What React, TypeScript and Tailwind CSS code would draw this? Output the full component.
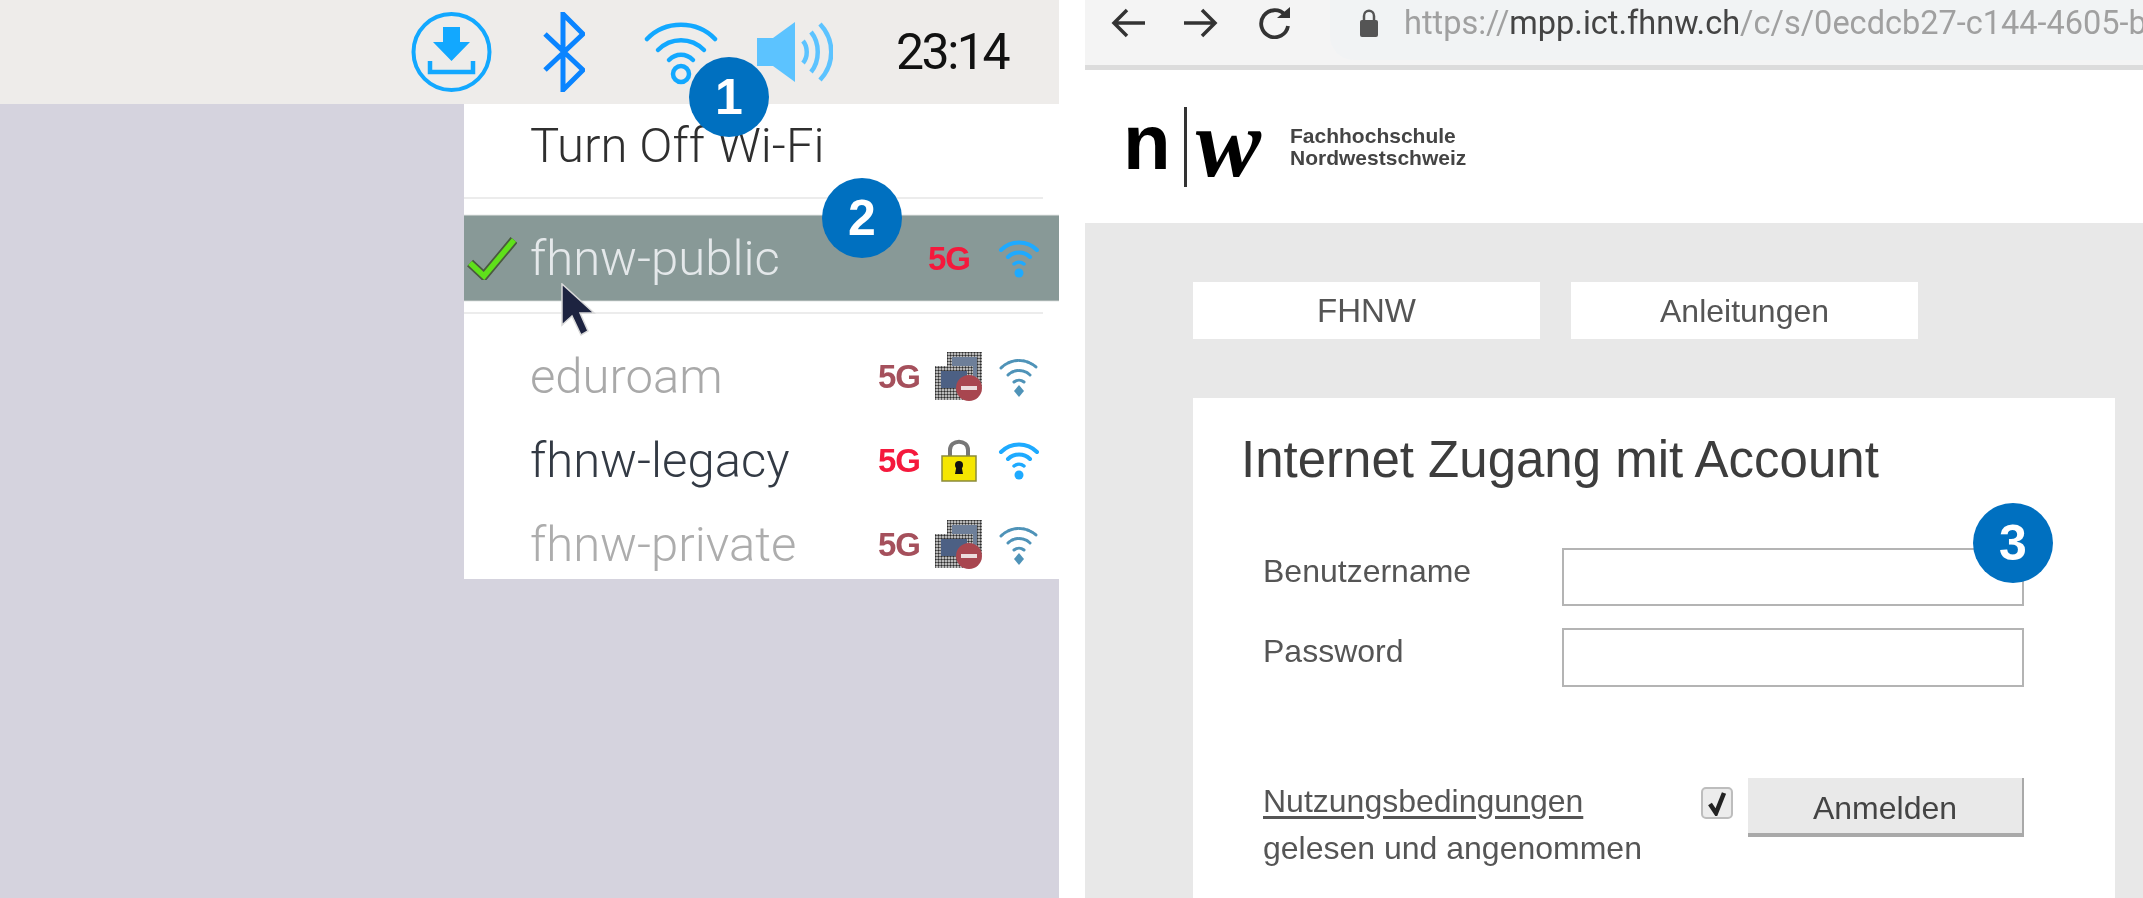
const roboto = "font-['Roboto',sans-serif]";
const arial = "font-['Liberation_Sans',Arial,sans-serif]";

function Wifi({ className = "", color = "#1eaaff", dot = true }: { className?: string; color?: string; dot?: boolean }) {
  return (
    <svg viewBox="0 0 42 42" className={className} fill="none" stroke={color} strokeLinecap="round">
      <path d="M3 13 C13 3 29 3 39 13" strokeWidth="4" />
      <path d="M10 20 C16 14 26 14 32 20" strokeWidth="4" />
      <path d="M16 27 C19 24.500 23 24.500 26 27" strokeWidth="3.500" />
      {dot && <circle cx="21" cy="36" r="4.500" fill={color} stroke="none" />}
    </svg>
  );
}

function FadedWifi({ className = "" }: { className?: string }) {
  return (
    <svg viewBox="0 0 42 42" className={className} fill="none" stroke="#4f93b8" strokeLinecap="round">
      <path d="M3 13 C13 3 29 3 39 13" strokeWidth="3" strokeDasharray="2.500 1.500" />
      <path d="M10 20 C16 14 26 14 32 20" strokeWidth="3" strokeDasharray="2.500 1.500" />
      <path d="M16 27 C19 24.500 23 24.500 26 27" strokeWidth="3" />
      <path d="M21 30 L26 36 L21 42 L16 36 Z" fill="#4f93b8" stroke="none" />
    </svg>
  );
}

function Blocked({ className = "", id }: { className?: string; id: string }) {
  return (
    <svg viewBox="0 0 49 50" className={className}>
      <defs>
        <pattern id={id} width="3" height="3" patternUnits="userSpaceOnUse">
          <rect width="3" height="3" fill="#e8e8e8" />
          <circle cx="1.500" cy="1.500" r="1.200" fill="#2d2d2d" />
        </pattern>
      </defs>
      <rect x="13" y="1" width="35" height="35" fill={`url(#${id})`} />
      <rect x="18" y="6" width="25" height="20" fill="#6e7f99" />
      <rect x="1" y="15" width="38" height="34" fill={`url(#${id})`} />
      <rect x="7" y="20" width="26" height="17" fill="#4c6084" />
      <circle cx="35" cy="37" r="13" fill="#a8464f" />
      <rect x="27" y="35" width="16" height="4" fill="#ecdcdc" />
    </svg>
  );
}

function Lock({ className = "" }: { className?: string }) {
  return (
    <svg viewBox="0 0 36 44" className={className}>
      <path d="M9 20 V12 C9 1 27 1 27 12 V20" fill="none" stroke="#777" strokeWidth="4" />
      <rect x="1" y="18" width="34" height="25" fill="#f5e600" stroke="#8a8a3a" strokeWidth="1.500" />
      <circle cx="18" cy="27" r="4" fill="#111" />
      <path d="M15.500 28 H20.500 L22 36 H14 Z" fill="#111" />
    </svg>
  );
}

function FiveG({ faded = false, className = "" }: { faded?: boolean; className?: string }) {
  return (
    <span className={`${arial} text-[33px] leading-none font-bold tracking-[-1px] ${faded ? "text-[#a5505c]" : "text-[#f5193c]"} ${className}`}>
      5G
    </span>
  );
}

function Badge({ n, className }: { n: string; className: string }) {
  return (
    <div className={`absolute flex h-[80px] w-[80px] items-center justify-center rounded-full bg-[#0070c0] text-[50px] leading-none font-bold text-white ${arial} ${className}`}>
      {n}
    </div>
  );
}

function Row({ name, tone, icons, height = "h-[84px]" }: { name: string; tone: string; icons: React.ReactNode; height?: string }) {
  return (
    <div className={`flex items-center pr-[19px] pl-[66px] ${height}`}>
      <span className={`flex-1 text-[49px] leading-none font-light ${tone}`}>{name}</span>
      {icons}
    </div>
  );
}

export default function App() {
  return (
    <div className={`relative flex h-[898px] w-[2143px] overflow-hidden bg-white ${arial}`}>
      {/* Left: desktop panel */}
      <div className={`flex h-full w-[1059px] flex-col bg-[#d5d3de] ${roboto}`}>
        <div className="flex h-[104px] items-center bg-[#eeecea] pl-[411px] blur-[0.6px]">
          <svg viewBox="0 0 81 82" className="h-[82px] w-[81px]" fill="none">
            <circle cx="40.500" cy="41" r="38" stroke="#12a8ff" strokeWidth="4" />
            <path d="M32 16 H49 V31 H59 L40.500 50 L22 31 H32 Z" fill="#12a8ff" />
            <path d="M19 50 V61 H62 V50" stroke="#12a8ff" strokeWidth="4.500" />
          </svg>
          <svg viewBox="0 0 42 80" className="ml-[51px] h-[80px] w-[42px]" fill="none">
            <path d="M2 22 L40 58 L20 78 V2 L40 22 L2 58" stroke="#0a84ff" strokeWidth="5" strokeLinejoin="miter" />
          </svg>
          <svg viewBox="0 0 74 66" className="ml-[59px] h-[66px] w-[74px]" fill="none" stroke="#12a8ff" strokeLinecap="round">
            <path d="M3 20 C21 1 53 1 71 20" strokeWidth="4.500" />
            <path d="M14 31 C27 18 47 18 60 31" strokeWidth="4.500" />
            <path d="M25 41 C32 34 42 34 49 41" strokeWidth="4.500" />
            <circle cx="37" cy="55" r="8" strokeWidth="4.500" />
          </svg>
          <svg viewBox="0 0 76 60" className="ml-[39px] h-[60px] w-[76px]" fill="none">
            <path d="M0 16 H16 L38 0 V60 L16 44 H0 Z" fill="#5cc3ff" />
            <path d="M46 19 C51 25 51 35 46 41" stroke="#5cc3ff" strokeWidth="4.500" />
            <path d="M54 10 C63 21 63 39 54 50" stroke="#5cc3ff" strokeWidth="4.500" />
            <path d="M63 2 C78 18 78 42 63 58" stroke="#5cc3ff" strokeWidth="4.500" />
          </svg>
          <span className="ml-[63px] text-[50px] leading-none font-normal tracking-[-2.500px] text-[#111]">23:14</span>
        </div>

        <div className="ml-[464px] flex h-[475px] w-[595px] flex-col overflow-hidden bg-white">
          <div className="blur-[0.6px]">
            <div className="flex h-[93px] items-center pb-[10px] pl-[66px] text-[49px] leading-none font-light text-[#2f2f2f]">
              Turn Off Wi-Fi
            </div>
            <div className="mr-[16px] h-[2px] bg-[#ececec]" />
            <div className="mt-[17px] flex h-[84px] items-center bg-[#889997] pr-[19px] shadow-[0_-1px_1px_#b5bfbd,0_1px_1px_#a8b3b1]">
              <svg viewBox="0 0 50 44" className="ml-[3px] h-[44px] w-[50px]" fill="none">
                <path d="M3 27 L17 40 L47 4" stroke="#4a5a3f" strokeWidth="9" />
                <path d="M3 27 L17 40 L47 4" stroke="#5fe01a" strokeWidth="5.500" />
              </svg>
              <span className="ml-[13px] flex-1 text-[49px] leading-none font-light text-[#e4e8ea]">fhnw-public</span>
              <FiveG className="mr-[28px]" />
              <Wifi className="h-[42px] w-[42px]" />
            </div>
            <div className="mt-[12px] mr-[16px] h-[2px] bg-[#ececec]" />
            <div className="mt-[20px]">
              <Row
                name="eduroam"
                tone="text-[#a9a9a9]"
                icons={
                  <div className="flex items-center">
                    <FiveG faded />
                    <Blocked id="dither-a" className="ml-[14px] h-[50px] w-[49px]" />
                    <FadedWifi className="ml-[15px] h-[42px] w-[42px]" />
                  </div>
                }
              />
              <Row
                name="fhnw-legacy"
                tone="text-[#333a44]"
                icons={
                  <div className="flex items-center">
                    <FiveG />
                    <Lock className="mr-[7px] ml-[21px] h-[44px] w-[36px]" />
                    <Wifi className="ml-[14px] h-[42px] w-[42px]" />
                  </div>
                }
              />
              <Row
                name="fhnw-private"
                tone="text-[#adadad]"
                icons={
                  <div className="flex items-center">
                    <FiveG faded />
                    <Blocked id="dither-b" className="ml-[14px] h-[50px] w-[49px]" />
                    <FadedWifi className="ml-[15px] h-[42px] w-[42px]" />
                  </div>
                }
              />
            </div>
          </div>
        </div>
      </div>

      {/* Right: browser panel */}
      <div className="ml-[26px] flex h-full min-w-0 flex-1 flex-col">
        <div className="flex h-[70px] shrink-0 border-b-[5px] border-[#dcdcdc] bg-[#f4f4f4] blur-[0.6px]">
          <div className="flex h-[46px] items-center pl-[26px]">
            <svg viewBox="0 0 34 30" className="h-[30px] w-[34px]" fill="none" stroke="#333" strokeWidth="3.500">
              <path d="M34 15 H3 M16 2 L3 15 L16 28" />
            </svg>
            <svg viewBox="0 0 34 30" className="ml-[39px] h-[30px] w-[34px]" fill="none" stroke="#333" strokeWidth="3.500">
              <path d="M0 15 H31 M18 2 L31 15 L18 28" />
            </svg>
            <svg viewBox="0 0 34 32" className="ml-[40px] h-[32px] w-[34px]" fill="none">
              <path d="M27 8 A13.500 13.500 0 1 0 30 19" stroke="#333" strokeWidth="3.800" />
              <path d="M19 11 H32 V0 Z" fill="#333" />
            </svg>
          </div>
          <div className="ml-[38px] flex h-[60px] min-w-0 flex-1 items-center overflow-hidden rounded-bl-[24px] bg-[#f1f3f4] pb-[14px] pl-[29px]">
            <svg viewBox="0 0 20 30" className="h-[30px] w-[20px] shrink-0">
              <path d="M5 13 V8 C5 1 15 1 15 8 V13" fill="none" stroke="#555" strokeWidth="2.500" />
              <rect x="1" y="12" width="18" height="17" rx="2" fill="#555" />
            </svg>
            <span className={`ml-[25px] text-[32.5px] leading-none whitespace-nowrap text-[#a0a0a0] ${roboto}`}>
              https://<span className="text-[#444]">mpp.ict.fhnw.ch</span>/c/s/0ecdcb27-c144-4605-b
            </span>
          </div>
        </div>

        <div className="flex h-[153px] shrink-0 items-center bg-white pl-[38px] blur-[0.5px]">
          <span className="mb-[10px] text-[78px] leading-none font-bold text-black">n</span>
          <div className="ml-[13px] h-[80px] w-[3px] bg-[#333]" />
          <span className="mb-[8px] ml-[9px] font-['Liberation_Serif',serif] text-[98px] leading-none font-bold text-black italic">w</span>
          <div className="ml-[29px] flex flex-col text-[21px] leading-[22px] font-bold text-[#444]">
            <span>Fachhochschule</span>
            <span>Nordwestschweiz</span>
          </div>
        </div>

        <div className="flex flex-1 flex-col bg-[#e8e8e8] pt-[59px] pr-[28px] pl-[108px]">
          <div className="flex gap-[31px] blur-[0.4px]">
            <div className="flex h-[57px] w-[347px] items-center justify-center bg-white text-[33px] text-[#555]">FHNW</div>
            <div className="flex h-[57px] w-[347px] items-center justify-center bg-white text-[32px] text-[#555]">Anleitungen</div>
          </div>
          <div className="mt-[59px] flex-1 bg-white pt-[36px] pr-[91px] pl-[48px] blur-[0.4px]">
            <h1 className="text-[51px] leading-[52px] font-normal text-[#3d3d3d]">Internet Zugang mit Account</h1>
            <div className="mt-[62px] flex items-start">
              <span className="ml-[22px] w-[299px] pt-[5px] text-[32px] leading-[36px] text-[#555]">Benutzername</span>
              <input className="h-[58px] w-[462px] border-2 border-[#b4b4b4] bg-white" aria-label="Benutzername" />
            </div>
            <div className="mt-[22px] flex items-start">
              <span className="ml-[22px] w-[299px] pt-[5px] text-[32px] leading-[36px] text-[#555]">Password</span>
              <input className="h-[59px] w-[462px] border-2 border-[#b4b4b4] bg-white" aria-label="Password" />
            </div>
            <div className="mt-[91px] flex items-start">
              <div className="ml-[22px] w-[438px] text-[32px] leading-[47px] text-[#555]">
                <div className="underline underline-offset-4">Nutzungsbedingungen</div>
                <div>gelesen und angenommen</div>
              </div>
              <div className="mt-[9px] flex h-[32px] w-[32px] items-center justify-center rounded-[5px] border-2 border-[#bdbdbd] bg-[#ececec]">
                <svg viewBox="0 0 20 26" className="h-[26px] w-[20px]" fill="none">
                  <path d="M3 14 L9 23 L17 3" stroke="#222" strokeWidth="4.500" />
                </svg>
              </div>
              <div className="ml-[15px] flex h-[59px] w-[276px] items-center justify-center border-r-2 border-b-4 border-[#a9a9a9] bg-[#e9e9e9] pt-[4px] text-[32px] text-[#444]">
                Anmelden
              </div>
            </div>
          </div>
        </div>
      </div>

      {/* Cursor over the menu */}
      <svg viewBox="0 0 36 58" className="absolute top-[283px] left-[560px] h-[58px] w-[36px] blur-[0.5px]">
        <path d="M2 1 V42 L12 33 L21 52 L28 48 L20 30 H34 Z" fill="#1d2340" stroke="#d9d9d9" strokeWidth="1.500" />
      </svg>

      <Badge n="1" className="top-[57px] left-[689px]" />
      <Badge n="2" className="top-[178px] left-[822px]" />
      <Badge n="3" className="top-[503px] left-[1973px]" />
    </div>
  );
}
